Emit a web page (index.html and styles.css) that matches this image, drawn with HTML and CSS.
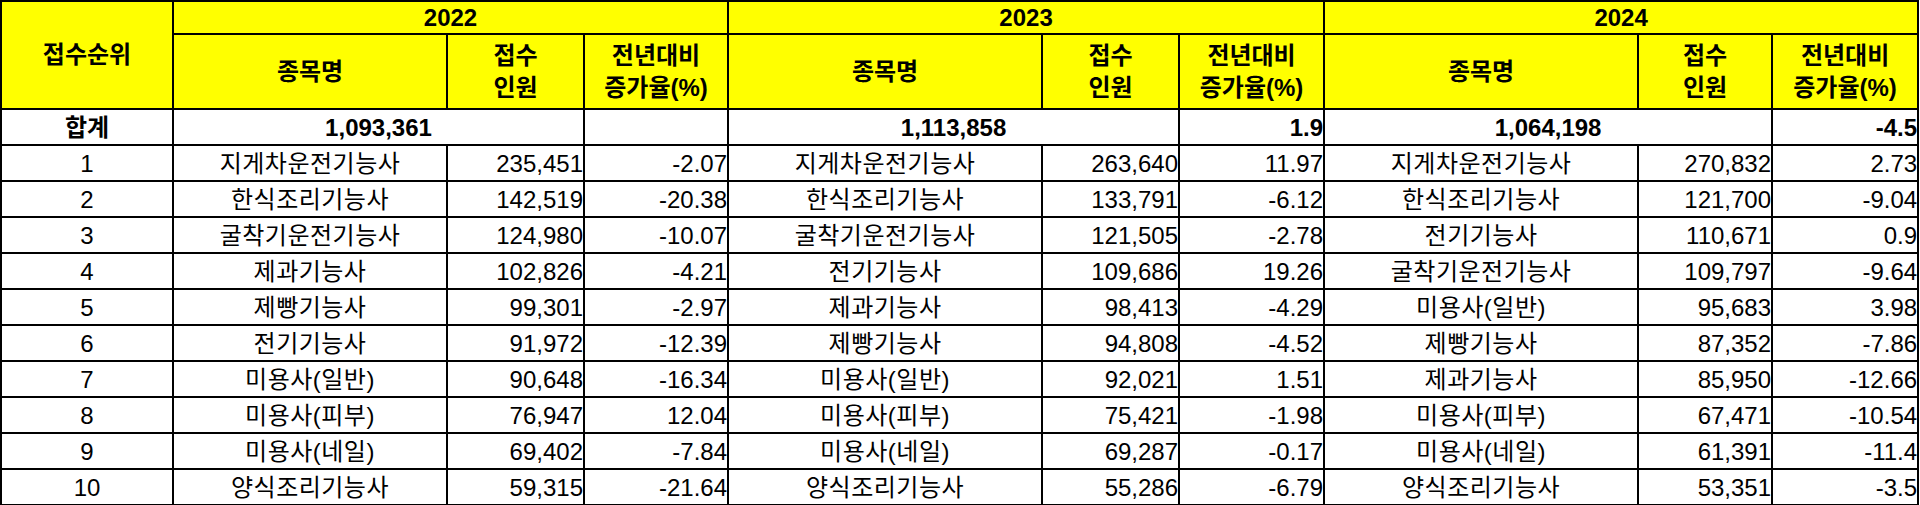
FILE: index.html
```html
<!DOCTYPE html>
<html lang="ko">
<head>
<meta charset="utf-8">
<title>접수순위</title>
<link rel="stylesheet" href="styles.css">
</head>
<body>
<table class="rank">
  <colgroup>
    <col class="c-rank">
    <col class="c-name22"><col class="c-cnt22"><col class="c-rate22">
    <col class="c-name23"><col class="c-cnt23"><col class="c-rate23">
    <col class="c-name24"><col class="c-cnt24"><col class="c-rate24">
  </colgroup>
  <thead>
    <tr class="h1">
      <th rowspan="2" class="hd">접수순위</th>
      <th colspan="3" class="hd">2022</th>
      <th colspan="3" class="hd">2023</th>
      <th colspan="3" class="hd">2024</th>
    </tr>
    <tr class="h2">
      <th class="hd">종목명</th><th class="hd">접수<br>인원</th><th class="hd">전년대비<br>증가율(%)</th>
      <th class="hd">종목명</th><th class="hd">접수<br>인원</th><th class="hd">전년대비<br>증가율(%)</th>
      <th class="hd">종목명</th><th class="hd">접수<br>인원</th><th class="hd">전년대비<br>증가율(%)</th>
    </tr>
  </thead>
  <tbody>
    <tr class="total">
      <td class="rk">합계</td>
      <td colspan="2" class="tot">1,093,361</td><td class="rt r22"></td>
      <td colspan="2" class="tot">1,113,858</td><td class="rt r23">1.9</td>
      <td colspan="2" class="tot">1,064,198</td><td class="rt r24">-4.5</td>
    </tr>
    <tr><td class="rk">1</td><td class="nm">지게차운전기능사</td><td class="ct n22">235,451</td><td class="rt r22">-2.07</td><td class="nm">지게차운전기능사</td><td class="ct n23">263,640</td><td class="rt r23">11.97</td><td class="nm">지게차운전기능사</td><td class="ct n24">270,832</td><td class="rt r24">2.73</td></tr>
    <tr><td class="rk">2</td><td class="nm">한식조리기능사</td><td class="ct n22">142,519</td><td class="rt r22">-20.38</td><td class="nm">한식조리기능사</td><td class="ct n23">133,791</td><td class="rt r23">-6.12</td><td class="nm">한식조리기능사</td><td class="ct n24">121,700</td><td class="rt r24">-9.04</td></tr>
    <tr><td class="rk">3</td><td class="nm">굴착기운전기능사</td><td class="ct n22">124,980</td><td class="rt r22">-10.07</td><td class="nm">굴착기운전기능사</td><td class="ct n23">121,505</td><td class="rt r23">-2.78</td><td class="nm">전기기능사</td><td class="ct n24">110,671</td><td class="rt r24">0.9</td></tr>
    <tr><td class="rk">4</td><td class="nm">제과기능사</td><td class="ct n22">102,826</td><td class="rt r22">-4.21</td><td class="nm">전기기능사</td><td class="ct n23">109,686</td><td class="rt r23">19.26</td><td class="nm">굴착기운전기능사</td><td class="ct n24">109,797</td><td class="rt r24">-9.64</td></tr>
    <tr><td class="rk">5</td><td class="nm">제빵기능사</td><td class="ct n22">99,301</td><td class="rt r22">-2.97</td><td class="nm">제과기능사</td><td class="ct n23">98,413</td><td class="rt r23">-4.29</td><td class="nm">미용사(일반)</td><td class="ct n24">95,683</td><td class="rt r24">3.98</td></tr>
    <tr><td class="rk">6</td><td class="nm">전기기능사</td><td class="ct n22">91,972</td><td class="rt r22">-12.39</td><td class="nm">제빵기능사</td><td class="ct n23">94,808</td><td class="rt r23">-4.52</td><td class="nm">제빵기능사</td><td class="ct n24">87,352</td><td class="rt r24">-7.86</td></tr>
    <tr><td class="rk">7</td><td class="nm">미용사(일반)</td><td class="ct n22">90,648</td><td class="rt r22">-16.34</td><td class="nm">미용사(일반)</td><td class="ct n23">92,021</td><td class="rt r23">1.51</td><td class="nm">제과기능사</td><td class="ct n24">85,950</td><td class="rt r24">-12.66</td></tr>
    <tr><td class="rk">8</td><td class="nm">미용사(피부)</td><td class="ct n22">76,947</td><td class="rt r22">12.04</td><td class="nm">미용사(피부)</td><td class="ct n23">75,421</td><td class="rt r23">-1.98</td><td class="nm">미용사(피부)</td><td class="ct n24">67,471</td><td class="rt r24">-10.54</td></tr>
    <tr><td class="rk">9</td><td class="nm">미용사(네일)</td><td class="ct n22">69,402</td><td class="rt r22">-7.84</td><td class="nm">미용사(네일)</td><td class="ct n23">69,287</td><td class="rt r23">-0.17</td><td class="nm">미용사(네일)</td><td class="ct n24">61,391</td><td class="rt r24">-11.4</td></tr>
    <tr><td class="rk">10</td><td class="nm">양식조리기능사</td><td class="ct n22">59,315</td><td class="rt r22">-21.64</td><td class="nm">양식조리기능사</td><td class="ct n23">55,286</td><td class="rt r23">-6.79</td><td class="nm">양식조리기능사</td><td class="ct n24">53,351</td><td class="rt r24">-3.5</td></tr>
  </tbody>
</table>
</body>
</html>
```

FILE: styles.css
```css
html, body {
  margin: 0;
  padding: 0;
  background: #ffffff;
}

.rank {
  border-collapse: collapse;
  table-layout: fixed;
  width: 1917px;
  font-family: "Liberation Sans", "Noto Sans CJK KR", sans-serif;
  font-size: 24px;
  color: #000;
}

.c-rank { width: 172px; }
.c-name22 { width: 274px; }
.c-cnt22 { width: 137px; }
.c-rate22 { width: 144px; }
.c-name23 { width: 314px; }
.c-cnt23 { width: 137px; }
.c-rate23 { width: 145px; }
.c-name24 { width: 314px; }
.c-cnt24 { width: 134px; }
.c-rate24 { width: 146px; }

.rank th,
.rank td {
  border: 2px solid #000;
  padding: 0;
  vertical-align: middle;
  white-space: nowrap;
  overflow: hidden;
}

.hd {
  background: #ffff00;
  font-weight: bold;
  text-align: center;
  line-height: 32px;
}

.h1 { height: 33px; }
.h1 .hd { line-height: 28px; }
.h2 { height: 75px; }

.rank tbody tr { height: 36px; }
.rank tbody td { line-height: 30px; padding-top: 1px; }

.rk { text-align: center; }
.nm { text-align: center; letter-spacing: 0.5px; }
.ct { text-align: right; }
.rt { text-align: right; }

.n22 { padding-right: 18px; }
.n23 { padding-right: 15px; }
.n24 { padding-right: 12px; }
.r22 { padding-right: 9px; }
.r23 { padding-right: 6px; }
.r24 { padding-right: 3px; }

.total td { font-weight: bold; }
.tot { text-align: center; }
.rank .total .tot { padding-right: 0; }
```
